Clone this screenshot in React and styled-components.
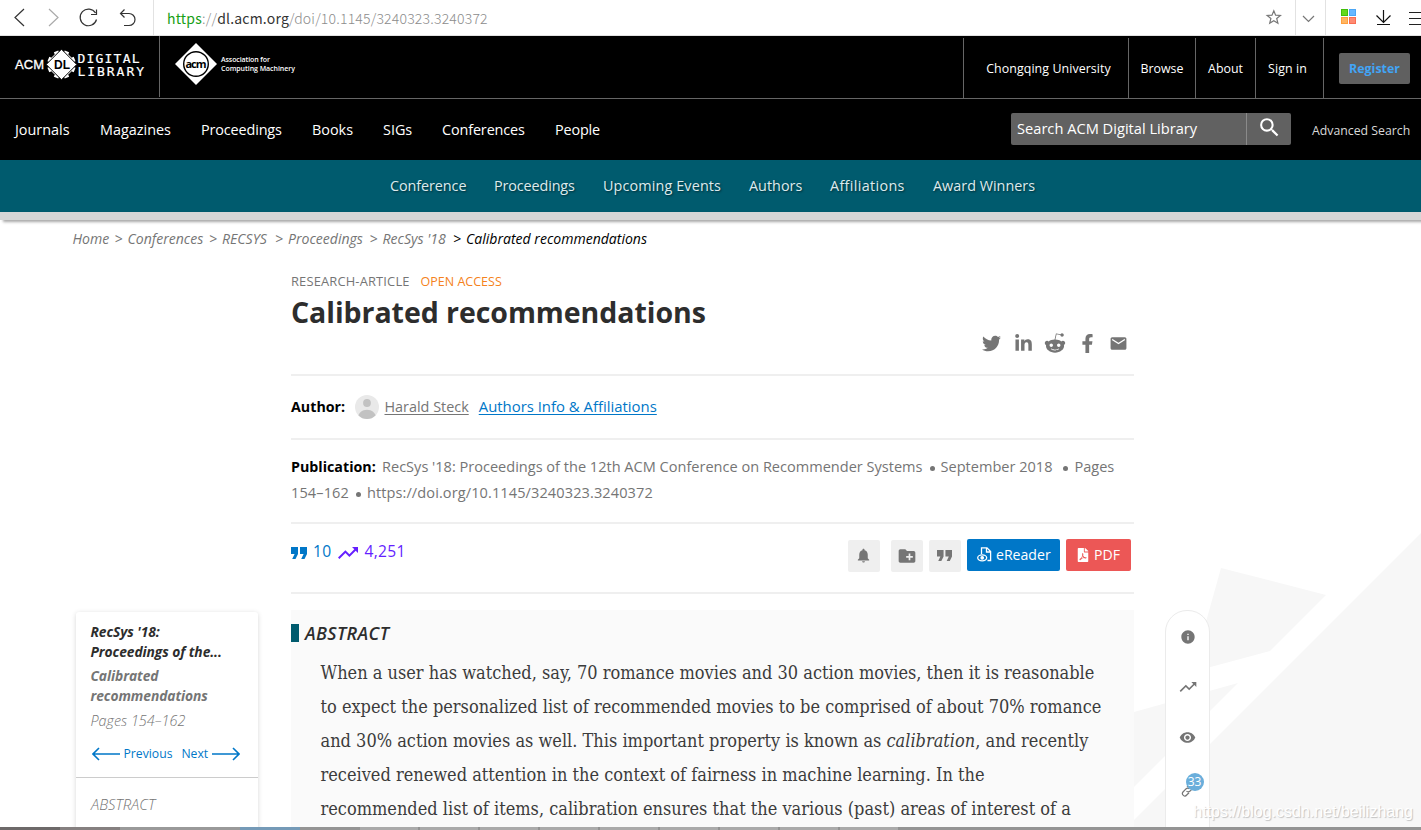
import React from "react";
import styled, { createGlobalStyle } from "styled-components";
import { FaTwitter, FaLinkedinIn, FaRedditAlien, FaFacebookF, FaFilePdf } from "react-icons/fa";
import {
  MdEmail,
  MdNotifications,
  MdCreateNewFolder,
  MdTrendingUp,
  MdSearch,
  MdInfo,
  MdRemoveRedEye,
} from "react-icons/md";

const GlobalStyle = createGlobalStyle`
  * { box-sizing: border-box; }
  body {
    margin: 0;
    background: #fff;
    color: #757575;
    font-family: "Open Sans", "Noto Sans", sans-serif;
    font-size: 14.4px;
  }
  h1, h2, p { margin: 0; }
  svg { display: block; flex: none; }
`;

const Page = styled.div`
  position: relative;
  display: flex;
  flex-direction: column;
  width: 1421px;
  height: 830px;
  overflow: hidden;
  white-space: nowrap;
`;

/* browser bar */

const BrowserBar = styled.div`
  display: flex;
  flex: none;
  height: 36px;
  border-bottom: 1px solid #e2e2e2;
  background: #fff;
`;

const BrowserButtons = styled.div`
  width: 154px;
  border-right: 1px solid #e2e2e2;
`;

const Address = styled.div`
  flex: 1;
  padding-left: 13px;
  font-family: "Noto Sans CJK SC", sans-serif;
  font-size: 14px;
  font-weight: 300;
  line-height: 36px;
  letter-spacing: 0.2px;
  color: #8c8c8c;

  em {
    font-style: normal;
    font-weight: 400;
    color: #18a016;
  }
  b {
    font-weight: 400;
    color: #333;
  }
`;

/* header */

const Header = styled.header`
  flex: none;
  background: #000;
  color: #fff;
`;

const HeaderTop = styled.div`
  display: flex;
  height: 63px;
  border-bottom: 1px solid #666;
`;

const LogoCell = styled.div`
  width: ${(p) => p.$width}px;
  height: 61px;
  border-right: ${(p) => (p.$divided ? "1px solid #666" : "none")};
`;

const HeaderLinks = styled.div`
  display: flex;
  margin-left: auto;
  padding-top: 2px;
`;

const HeaderLink = styled.a`
  display: flex;
  align-items: center;
  justify-content: center;
  width: ${(p) => p.$width}px;
  padding-left: ${(p) => p.$indent || 0}px;
  padding-right: ${(p) => p.$outdent || 0}px;
  padding-top: ${(p) => (p.$last ? 0 : 1)}px;
  border-left: 1px solid #666;
  font-size: 12.4px;
  letter-spacing: ${(p) => p.$spacing || 0}px;
`;

const Register = styled.button`
  width: 71px;
  height: 31px;
  padding: 0;
  border: 0;
  border-radius: 2px;
  background: #606060;
  color: #42a5f5;
  font: 700 12.4px "Open Sans", sans-serif;
`;

const MainNav = styled.nav`
  display: flex;
  align-items: center;
  height: 61px;
  padding: 0 11px 2px 15px;
`;

const NavItem = styled.a`
  width: ${(p) => p.$width}px;
  margin-right: 30px;
  padding-top: 2px;
  letter-spacing: ${(p) => p.$spacing || 0}px;
`;

const SearchBox = styled.div`
  display: flex;
  width: 280px;
  height: 32px;
  margin-left: auto;
  border-radius: 2px;
  background: #616161;
  font-size: 14.65px;
  line-height: 31px;
`;

const SearchField = styled.div`
  width: 236px;
  padding-left: 6px;
  border-right: 1px solid #8a8a8a;
`;

const SearchButton = styled.div`
  display: flex;
  flex: 1;
  align-items: center;
  justify-content: center;
  padding-bottom: 2px;
`;

const AdvancedSearch = styled.a`
  width: 98px;
  margin: 4px 0 0 21px;
  font-size: 12.3px;
  color: #d8d8d8;
`;

const SubNav = styled.nav`
  display: flex;
  flex: none;
  height: 52px;
  padding-left: 390px;
  background: #005b6e;
  color: #dcebee;
  line-height: 51px;
  text-shadow: 1px 1px 2px rgba(0, 0, 0, 0.5);
`;

const SubNavItem = styled.a`
  width: ${(p) => p.$width}px;
  margin-right: 28px;
  letter-spacing: ${(p) => p.$spacing || 0}px;
`;

const Strip = styled.div`
  flex: none;
  height: 8px;
  background: #d6d6d6;
  box-shadow: 3px 2px 3px rgba(0, 0, 0, 0.35);
`;

/* content */

const Breadcrumb = styled.div`
  display: flex;
  flex: none;
  height: 42px;
  padding-left: 72.5px;
  font-size: 14.05px;
  font-style: italic;
  line-height: 37px;

  span:not(:first-child)::before {
    content: ">";
    margin: 0 5px;
  }
  span:last-child { color: #000; }
`;

const Crumb = styled.span`
  width: ${(p) => p.$width}px;
`;

const Body = styled.div`
  display: grid;
  flex: 1;
  min-height: 0;
  grid-template-columns: 182px 843px 45px;
  column-gap: 32px;
  padding-left: 76px;
`;

const Backdrop = styled.svg`
  position: absolute;
  right: 0;
  bottom: 3px;
  z-index: -1;
`;

const SideCard = styled.aside`
  height: 230px;
  margin-top: 350px;
  border-radius: 3px;
  background: #fff;
  box-shadow: 0 1px 5px rgba(0, 0, 0, 0.16);
  font-style: italic;
  line-height: 20px;
`;

const SideTop = styled.div`
  height: 166px;
  padding: 10px 15px 0 14.5px;
  border-bottom: 1px solid #ccc;
`;

const SideTitle = styled.p`
  font-size: 13.8px;
  font-weight: 700;
  letter-spacing: -0.07px;
  color: ${(p) => (p.$dark ? "#2d2d2d" : "#757575")};
  margin-bottom: ${(p) => (p.$dark ? 4 : 5)}px;
`;

const SidePages = styled.p`
  font-size: 14.4px;
  font-weight: 300;
`;

const SideLinks = styled.div`
  display: flex;
  align-items: center;
  gap: 4px;
  margin: 13px 0 0 1px;
  font-size: 12.2px;
  font-style: normal;
  color: #0077c8;

  span + span { margin-left: 5px; }
`;

const SideSection = styled.div`
  padding: 16px 15px;
  font-size: 14.8px;
  font-weight: 300;
`;

const Article = styled.main`
  width: 843px;
  margin-left: 1px;
`;

const Eyebrow = styled.div`
  display: flex;
  gap: 11px;
  padding-top: 9px;
  font-size: 12.9px;
  line-height: 20px;
`;

const ArticleType = styled.span`
  letter-spacing: 0.16px;
`;

const OpenAccess = styled.span`
  color: #f58220;
  font-size: 12.5px;
  line-height: 21px;
`;

const Title = styled.h1`
  font-size: 28.5px;
  line-height: 40px;
  font-weight: 700;
  letter-spacing: -0.05px;
  color: #2d2d2d;
`;

const ShareRow = styled.div`
  display: flex;
  align-items: center;
  justify-content: flex-end;
  height: 42px;
  padding-bottom: 20px;
`;

const ShareIcon = styled.span`
  display: flex;
  justify-content: center;
  width: 32px;

  &:last-child { width: 31px; }
`;

const Row = styled.section`
  display: flex;
  align-items: ${(p) => p.$align || "center"};
  height: ${(p) => p.$height}px;
  border-top: 2px solid #efefef;
`;

const Strong = styled.strong`
  display: inline-block;
  width: ${(p) => p.$width}px;
  padding-bottom: ${(p) => p.$lift || 0}px;
  font-size: 14.25px;
  color: #000;
`;

const Link = styled.a`
  margin-left: ${(p) => p.$gap}px;
  padding-bottom: 2px;
  color: ${(p) => p.$color || "inherit"};
  font-size: ${(p) => p.$size}px;
  text-decoration: underline;
  text-underline-offset: 2px;
`;

const Publication = styled.div`
  padding-top: 13px;
  font-size: 14.55px;
  line-height: 26px;
`;

const PublicationLine = styled.div`
  height: 26px;
  letter-spacing: ${(p) => p.$spacing || 0}px;
`;

const Dot = styled.span`
  display: inline-block;
  width: 5px;
  height: 5px;
  margin: 0 6px 1px ${(p) => p.$before || 7}px;
  border-radius: 50%;
  background: #757575;
`;

const Metric = styled.span`
  display: flex;
  align-items: center;
  gap: ${(p) => p.$gap}px;
  height: 26px;
  margin: 14px 5px 0 0;
  color: ${(p) => p.$color};
  font-size: 15.6px;

  svg { margin-top: 3px; }
  span { letter-spacing: 0.3px; }
`;

const Tools = styled.div`
  display: flex;
  gap: 6px;
  margin: 15px 3px 0 auto;
`;

const IconButton = styled.span`
  display: flex;
  align-items: center;
  justify-content: center;
  width: 32px;
  height: 32px;
  margin: 1px ${(p) => (p.$spaced ? 5 : 0)}px 0 0;
  padding: 0 1px 1px 0;
  border-radius: 2px;
  background: #efefef;
`;

const ActionButton = styled.span`
  display: flex;
  align-items: center;
  gap: 4px;
  width: ${(p) => p.$width}px;
  height: 32px;
  padding: 0 0 1px 10px;
  border-radius: 2px;
  background: ${(p) => p.$color};
  color: #fff;
  font-size: 14.1px;
`;

const Abstract = styled.section`
  height: 240px;
  margin-top: 16px;
  padding: 13px 0 0;
  background: #fafafa;
  color: #333;
`;

const AbstractHeading = styled.h2`
  display: flex;
  align-items: center;
  gap: 6px;
  height: 20px;
  font-size: 17.9px;
  font-style: italic;
  font-weight: 600;
  line-height: 18px;
  letter-spacing: 0.4px;
  color: #2d2d2d;

  &::before {
    content: "";
    width: 8px;
    height: 18px;
    background: #005b6e;
  }
`;

const AbstractText = styled.p`
  padding: 13px 0 0 29.5px;
  font-family: "DejaVu Serif Condensed", "DejaVu Serif", serif;
  font-stretch: condensed;
  font-size: 18px;
  line-height: 34px;
  color: #3c3c3c;
`;

const Rail = styled.aside`
  display: flex;
  flex-direction: column;
  align-items: center;
  height: 240px;
  margin-top: 348px;
  padding-top: 18px;
  border-radius: 22px 22px 0 0;
  background: #fff;
  border: 1px solid #ebebeb;
  color: #757575;
`;

const RailItem = styled.div`
  position: relative;
  display: flex;
  justify-content: center;
  height: ${(p) => p.$height || 50}px;
`;

const Badge = styled.span`
  position: absolute;
  left: 5px;
  top: -10px;
  width: 18px;
  height: 18px;
  border-radius: 50%;
  background: #6aaedb;
  color: #fff;
  font-size: 12px;
  line-height: 18px;
  text-align: center;
`;

const Watermark = styled.div`
  position: absolute;
  right: 8px;
  bottom: 8px;
  font: 16px "Liberation Sans", Arial, sans-serif;
  line-height: 20px;
  color: #fff;
  text-shadow: 1px 1px 1px rgba(0, 0, 0, 0.22);
`;

const BottomEdge = styled.div`
  position: absolute;
  left: 0;
  bottom: 0;
  display: flex;
  width: 100%;
  height: 3px;
  background: #949494;
`;

const EdgePiece = styled.span`
  width: ${(p) => p.$width}px;
  background: ${(p) => p.$color};
  border-right: ${(p) => (p.$tab ? "2px solid #929292" : "none")};
`;

const BrowserNavIcons = () => (
  <svg width="153" height="35" fill="none" stroke="#333" strokeWidth="1.2">
    <path d="M24 9 L15 17.5 L24 26" />
    <path d="M49 9 L58 17.5 L49 26" stroke="#aaa" />
    <path d="M95.5 13 A8.3 8.3 0 1 0 96.5 19.5 M96.5 9.5 V14.5 H91" />
    <path d="M124.5 9.5 L120.5 13.5 L124.5 17.5 M120.5 13.5 H129 A6 6 0 0 1 129 25.5 H124" />
  </svg>
);

const BrowserActions = () => (
  <svg width="161" height="35" fill="none" stroke="#777">
    <path
      d="M13.8 10.8 L15.6 15.2 L20.4 15.5 L16.7 18.5 L17.9 23.2 L13.8 20.7 L9.7 23.2 L10.9 18.5 L7.2 15.5 L12 15.2Z"
      strokeWidth="1.2"
    />
    <path d="M35.5 0 V35 M65.5 0 V35" stroke="#e2e2e2" />
    <path d="M43 16 L48.5 21.5 L54 16" strokeWidth="1.2" />
    <rect x="81.5" y="9.5" width="6" height="6" fill="#65d91b" stroke="#42bd0b" />
    <rect x="89.5" y="9.5" width="6" height="6" fill="#68b8ff" stroke="#4ba6f5" />
    <rect x="81.5" y="17.5" width="6" height="6" fill="#ffb562" stroke="#ff9f3c" />
    <rect x="89.5" y="17.5" width="6" height="6" fill="#ff8b72" stroke="#f96d52" />
    <path d="M123.5 10 V22 M116.5 15.5 L123.5 22.5 L130.5 15.5 M117 24.5 H130" stroke="#111" strokeWidth="1.2" />
    <path d="M149 12.5 H161 M149 18.5 H161 M149 24.5 H161" stroke="#222" />
  </svg>
);

const LibraryLogo = () => (
  <svg width="159" height="61" fill="#fff">
    <g transform="translate(61.5 28.5)">
      {[22.5, 67.5, 112.5, 157.5].map((a) => (
        <rect key={a} x="-2.4" y="-14.2" width="4.8" height="28.4" transform={`rotate(${a})`} />
      ))}
      <circle r="12" />
      <path d="M0 -15.3 L15.3 0 L0 15.3 L-15.3 0Z" stroke="#000" />
    </g>
    <text x="15" y="33" fontFamily="Liberation Sans, sans-serif" fontSize="13" textLength="29" stroke="#fff" strokeWidth="0.3">
      ACM
    </text>
    <text x="54" y="33" fontFamily="Liberation Sans, sans-serif" fontSize="12" fontWeight="700" textLength="16" fill="#000">
      DL
    </text>
    <g fontFamily="DejaVu Sans Mono, monospace" fontSize="13" stroke="#fff" strokeWidth="0.2">
      <text x="77.5" y="26.8" textLength="62">DIGITAL</text>
      <text x="77.5" y="39.5" textLength="66.5">LIBRARY</text>
    </g>
  </svg>
);

const AcmLogo = () => (
  <svg width="150" height="61" fill="#fff">
    <path d="M36 7 L57 28 L36 49 L15 28Z" />
    <circle cx="36" cy="28" r="12.3" fill="none" stroke="#000" strokeWidth="1.4" />
    <text x="25.5" y="31.5" fontFamily="Open Sans, sans-serif" fontSize="11" fontWeight="700" textLength="21" fill="#000">
      acm
    </text>
    <g fontFamily="Open Sans, sans-serif" fontSize="7" fontWeight="600">
      <text x="61" y="26.3" textLength="49">Association for</text>
      <text x="61" y="35" textLength="74">Computing Machinery</text>
    </g>
  </svg>
);

const Avatar = () => (
  <svg width="24" height="24" viewBox="0 0 24 24">
    <clipPath id="avatar"><circle cx="12" cy="12" r="12" /></clipPath>
    <g clipPath="url(#avatar)">
      <rect width="24" height="24" fill="#e9e9e9" />
      <circle cx="12" cy="8" r="3.9" fill="#c2c2c2" />
      <path d="M2.5 24 C3 11.5 21 11.5 21.5 24Z" fill="#c2c2c2" />
    </g>
  </svg>
);

const QuoteIcon = ({ width }) => (
  <svg width={width} height={width * 0.75} viewBox="0 0 16 12" fill="currentColor">
    <path d="M0 0 H7 V7 L4.5 12 H1.2 L3.6 7 H0Z M9 0 H16 V7 L13.5 12 H10.2 L12.6 7 H9Z" />
  </svg>
);

const ReaderIcon = () => (
  <svg width="15" height="15" fill="none" stroke="#fff" strokeWidth="1.3">
    <path d="M4.5 7 V.9 H10 L13.6 4.5 V13.5 H10.5 M9.5 1 V5 H13.5" />
    <ellipse cx="5.2" cy="10.8" rx="4.5" ry="3" />
    <circle cx="5.2" cy="10.8" r="1.2" fill="#fff" />
  </svg>
);

const Arrow = ({ right }) => (
  <svg width="28" height="14" fill="none" stroke="currentColor" strokeWidth="1.6">
    <path d={right ? "M0 7 H27 M21 1 L27 7 L21 13" : "M28 7 H1 M7 1 L1 7 L7 13"} />
  </svg>
);

const LinkIcon = () => (
  <svg width="14" height="14" viewBox="0 0 14 14" fill="none" stroke="currentColor" strokeWidth="1.2">
    <path d="M6 4.2 L8.3 1.9 A2.2 2.2 0 0 1 12 5 L8.8 8.3 A2.2 2.2 0 0 1 5.5 8" />
    <path d="M8 9.8 L5.7 12 A2.2 2.2 0 0 1 2 9 L5.2 5.7 A2.2 2.2 0 0 1 8.5 6" />
  </svg>
);

const navItems = [
  { text: "Journals", width: 55 },
  { text: "Magazines", width: 71 },
  { text: "Proceedings", width: 81, spacing: -0.13 },
  { text: "Books", width: 41 },
  { text: "SIGs", width: 29 },
  { text: "Conferences", width: 83, spacing: -0.12 },
  { text: "People", width: 45, spacing: -0.15 },
];
const subNavItems = [
  { text: "Conference", width: 76, spacing: -0.08 },
  { text: "Proceedings", width: 81, spacing: -0.13 },
  { text: "Upcoming Events", width: 118, spacing: 0.12 },
  { text: "Authors", width: 53 },
  { text: "Affiliations", width: 75, spacing: 0.33 },
  { text: "Award Winners", width: 102 },
];
const crumbs = [
  { text: "Home", width: 37 },
  { text: "Conferences", width: 94.5 },
  { text: "RECSYS", width: 66 },
  { text: "Proceedings", width: 94.5 },
  { text: "RecSys '18", width: 83.5 },
  { text: "Calibrated recommendations", width: 210 },
];

function App() {
  return (
    <Page>
      <GlobalStyle />
      <Backdrop width="287" height="294" viewBox="1134 533 287 294" fill="#f7f7f7">
        <path d="M1221 568 L1326 595 L1270 651 L1192 672Z" />
        <path d="M1238 683 L1134 712 V787Z" />
        <path d="M1421 533 L1134 820 V827 H1421Z" />
      </Backdrop>

      <BrowserBar>
        <BrowserButtons><BrowserNavIcons /></BrowserButtons>
        <Address>
          <em>https</em>://<b>dl.acm.org</b>/doi/10.1145/3240323.3240372
        </Address>
        <BrowserActions />
      </BrowserBar>

      <Header>
        <HeaderTop>
          <LogoCell $width={160} $divided><LibraryLogo /></LogoCell>
          <LogoCell $width={150}><AcmLogo /></LogoCell>
          <HeaderLinks>
            <HeaderLink $width={165} $indent={5} $spacing={0.08}>Chongqing University</HeaderLink>
            <HeaderLink $width={67}>Browse</HeaderLink>
            <HeaderLink $width={60}>About</HeaderLink>
            <HeaderLink $width={68} $outdent={4} $spacing={0.1}>Sign in</HeaderLink>
            <HeaderLink $width={98} $indent={4} $last>
              <Register>Register</Register>
            </HeaderLink>
          </HeaderLinks>
        </HeaderTop>
        <MainNav>
          {navItems.map((item) => (
            <NavItem key={item.text} $width={item.width} $spacing={item.spacing}>{item.text}</NavItem>
          ))}
          <SearchBox>
            <SearchField>Search ACM Digital Library</SearchField>
            <SearchButton><MdSearch size={25} /></SearchButton>
          </SearchBox>
          <AdvancedSearch>Advanced Search</AdvancedSearch>
        </MainNav>
      </Header>
      <SubNav>
        {subNavItems.map((item) => (
          <SubNavItem key={item.text} $width={item.width} $spacing={item.spacing}>{item.text}</SubNavItem>
        ))}
      </SubNav>
      <Strip />

      <Breadcrumb>
        {crumbs.map((crumb) => (
          <Crumb key={crumb.text} $width={crumb.width}>{crumb.text}</Crumb>
        ))}
      </Breadcrumb>

      <Body>
        <SideCard>
          <SideTop>
            <SideTitle $dark>RecSys '18:<br />Proceedings of the...</SideTitle>
            <SideTitle>Calibrated<br />recommendations</SideTitle>
            <SidePages>Pages 154–162</SidePages>
            <SideLinks>
              <Arrow />
              <span>Previous</span>
              <span>Next</span>
              <Arrow right />
            </SideLinks>
          </SideTop>
          <SideSection>ABSTRACT</SideSection>
        </SideCard>

        <Article>
          <Eyebrow>
            <ArticleType>RESEARCH-ARTICLE</ArticleType>
            <OpenAccess>OPEN ACCESS</OpenAccess>
          </Eyebrow>
          <Title>Calibrated recommendations</Title>
          <ShareRow>
            <ShareIcon><FaTwitter size={19} /></ShareIcon>
            <ShareIcon><FaLinkedinIn size={19} /></ShareIcon>
            <ShareIcon><FaRedditAlien size={22} /></ShareIcon>
            <ShareIcon><FaFacebookF size={19} /></ShareIcon>
            <ShareIcon><MdEmail size={19} /></ShareIcon>
          </ShareRow>

          <Row $height={64}>
            <Strong $width={64} $lift={2}>Author:</Strong>
            <Avatar />
            <Link $gap={5.5} $size={14.4}>Harald Steck</Link>
            <Link $gap={10} $size={14.9} $color="#0077c8">Authors Info &amp; Affiliations</Link>
          </Row>
          <Row $height={84} $align="flex-start">
            <Publication>
              <PublicationLine>
                <Strong $width={91}>Publication:</Strong>
                RecSys '18: Proceedings of the 12th ACM Conference on Recommender Systems
                <Dot />September 2018<Dot $before={11} />Pages
              </PublicationLine>
              <PublicationLine $spacing={0.1}>
                154–162<Dot />https://doi.org/10.1145/3240323.3240372
              </PublicationLine>
            </Publication>
          </Row>
          <Row $height={70} $align="flex-start">
            <Metric $gap={6} $color="#0077c8"><QuoteIcon width={16} /><span>10</span></Metric>
            <Metric $gap={4} $color="#651fff"><MdTrendingUp size={24} /><span>4,251</span></Metric>
            <Tools>
              <IconButton $spaced><MdNotifications size={17} /></IconButton>
              <IconButton><MdCreateNewFolder size={20} /></IconButton>
              <IconButton><QuoteIcon width={15} /></IconButton>
              <ActionButton $width={93} $color="#0077c8"><ReaderIcon />eReader</ActionButton>
              <ActionButton $width={65} $color="#ec5756"><FaFilePdf size={14} />PDF</ActionButton>
            </Tools>
          </Row>
          <Row $height={2} />

          <Abstract>
            <AbstractHeading>ABSTRACT</AbstractHeading>
            <AbstractText>
              When a user has watched, say, 70 romance movies and 30 action movies, then it is reasonable<br />
              to expect the personalized list of recommended movies to be comprised of about 70% romance<br />
              and 30% action movies as well. This important property is known as <em>calibration</em>, and recently<br />
              received renewed attention in the context of fairness in machine learning. In the<br />
              recommended list of items, calibration ensures that the various (past) areas of interest of a
            </AbstractText>
          </Abstract>
        </Article>

        <Rail>
          <RailItem $height={48}><MdInfo size={16} /></RailItem>
          <RailItem $height={52}><MdTrendingUp size={20} /></RailItem>
          <RailItem $height={54}><MdRemoveRedEye size={17} /></RailItem>
          <RailItem><LinkIcon /><Badge>33</Badge></RailItem>
        </Rail>
      </Body>

      <Watermark>https://blog.csdn.net/beilizhang</Watermark>
      <BottomEdge>
        <EdgePiece $width={60} $color="#6d6969" />
        <EdgePiece $width={60} $color="#858080" />
        <EdgePiece $width={120} $color="#999" />
        <EdgePiece $width={60} $color="#759ab7" />
        <EdgePiece $width={60} $color="#949494" />
        {[1, 2, 3, 4, 5, 6, 7, 8, 9].map((n) => (
          <EdgePiece key={n} $width={60} $color="#aaa" $tab />
        ))}
      </BottomEdge>
    </Page>
  );
}

export default App;
